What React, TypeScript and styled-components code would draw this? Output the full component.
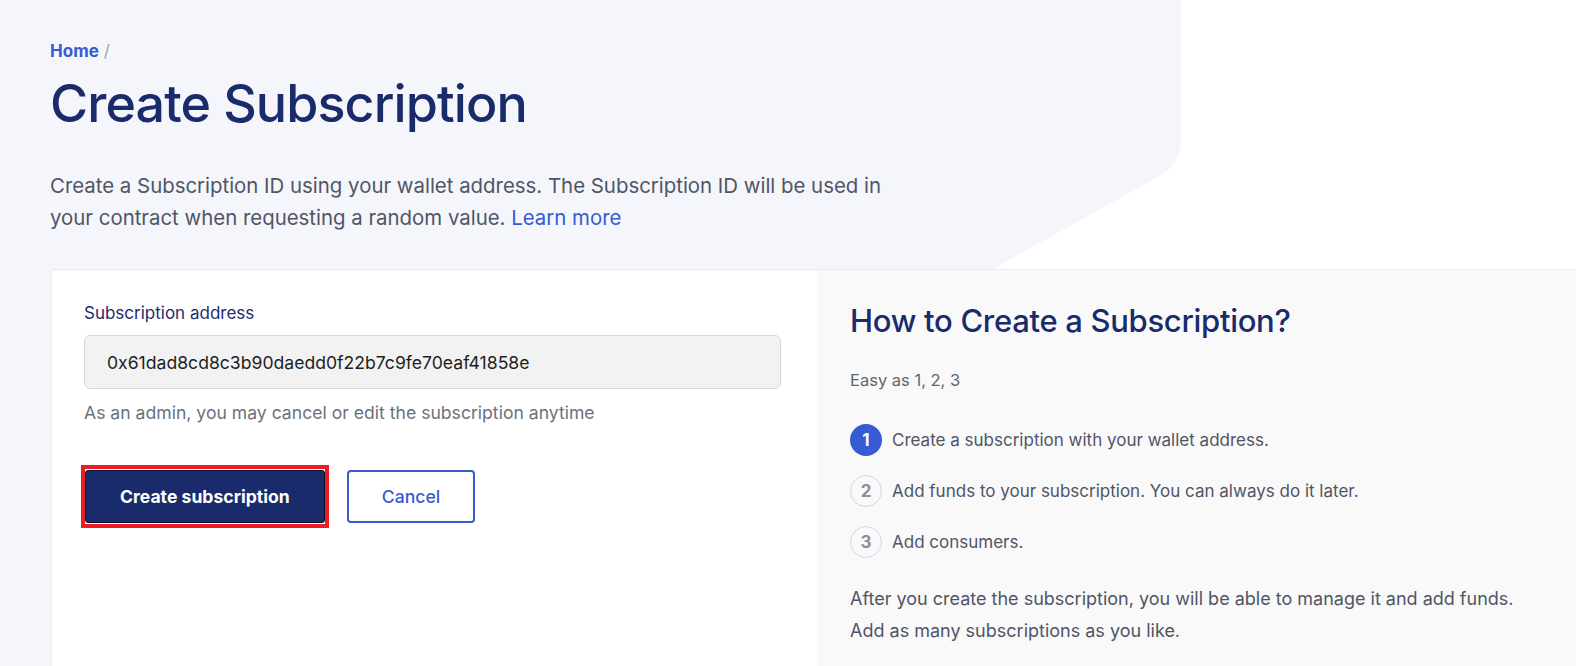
import React from 'react'
import styled, { createGlobalStyle } from 'styled-components'

const GlobalStyle = createGlobalStyle`
  body {
    margin: 0;
    background: #ffffff;
    font-family: Inter, 'Noto Sans', sans-serif;
    -webkit-font-smoothing: antialiased;
  }
`

const Page = styled.div`
  position: relative;
  min-height: 666px;
  overflow: hidden;

  /* light hero shape with the cut corner behind the header */
  &::before {
    content: '';
    position: absolute;
    left: 0;
    top: 0;
    width: 1181px;
    height: 900px;
    background: #f5f6fb;
    clip-path: path('M0 0 H1181 V140 Q1181 162 1163 174 L0 825 Z');
  }
`

const Header = styled.header`
  position: relative;
  padding: 40px 50px 0;
`

const Breadcrumb = styled.nav`
  display: flex;
  gap: 5px;
  font-size: 17px;
  line-height: 22px;
  font-weight: 700;
  color: #375bd2;

  span {
    color: #a0a4ad;
    font-weight: 400;
  }
`

const Title = styled.h1`
  margin: 10px 0 0;
  font-size: 52px;
  line-height: 64px;
  font-weight: 500;
  letter-spacing: -0.9px;
  color: #1a2b6b;
`

const Lead = styled.p`
  margin: 34px 0 0;
  max-width: 850px;
  font-size: 20.4px;
  line-height: 32px;
  color: #4f5566;
`

const Link = styled.a`
  color: #375bd2;
  text-decoration: none;
`

const Card = styled.section`
  position: relative;
  margin: 35px 0 0 51px;
  display: grid;
  grid-template-columns: 765px 1fr;
  min-height: 420px;
  border: 1px solid #e8eaef;
  border-right: none;
  border-radius: 4px 0 0 0;
  background: #ffffff;
  overflow: hidden;
`

const FormPanel = styled.div`
  padding: 32px 32px 40px;
`

const Label = styled.label`
  display: block;
  font-size: 17px;
  line-height: 22px;
  color: #1f2d6b;
`

const AddressField = styled.div`
  margin-top: 11px;
  width: 697px;
  height: 54px;
  box-sizing: border-box;
  display: flex;
  align-items: center;
  padding: 0 22px;
  background: #f2f2f2;
  border: 1px solid #d6d8dc;
  border-radius: 6px;
  font-size: 17.6px;
  color: #1e1f24;
`

const Hint = styled.p`
  margin: 13px 0 0;
  font-size: 17.6px;
  line-height: 22px;
  color: #6b717c;
`

const Actions = styled.div`
  margin-top: 41px;
  display: flex;
  align-items: center;
  gap: 18px;
`

const Highlight = styled.span`
  display: inline-flex;
  margin-left: -3px;
  padding: 1px 0;
  border: 4px solid #ec1c24;
`

const Button = styled.button<{ $primary?: boolean }>`
  height: 53px;
  box-sizing: border-box;
  padding: 0 ${(p) => (p.$primary ? '34px' : '33px')};
  border-radius: ${(p) => (p.$primary ? '3px' : '4px')};
  font-family: inherit;
  font-size: 17.6px;
  font-weight: ${(p) => (p.$primary ? 700 : 500)};
  cursor: pointer;
  background: ${(p) => (p.$primary ? '#1a2b6b' : '#ffffff')};
  color: ${(p) => (p.$primary ? '#ffffff' : '#375bd2')};
  border: ${(p) => (p.$primary ? '1px solid #0b1128' : '2px solid #375bd2')};
`

const GuidePanel = styled.aside`
  background: #f9f9fa;
  padding: 31px 33px 40px;
`

const GuideTitle = styled.h2`
  margin: 0;
  font-size: 31px;
  line-height: 40px;
  font-weight: 500;
  letter-spacing: -0.3px;
  color: #1a2b6b;
`

const Muted = styled.p`
  margin: 29px 0 0;
  font-size: 16.5px;
  line-height: 20px;
  color: #5f6572;
`

const Steps = styled.ol`
  list-style: none;
  margin: 34px 0 0;
  padding: 0;
  display: flex;
  flex-direction: column;
  gap: 19px;
`

const Step = styled.li`
  display: flex;
  align-items: center;
  gap: 10px;
  font-size: 17px;
  color: #4f5566;
`

const StepNum = styled.span<{ $active?: boolean }>`
  width: 32px;
  height: 32px;
  box-sizing: border-box;
  flex-shrink: 0;
  border-radius: 50%;
  display: flex;
  align-items: center;
  justify-content: center;
  font-size: 17px;
  font-weight: 700;
  background: ${(p) => (p.$active ? '#375bd2' : 'transparent')};
  color: ${(p) => (p.$active ? '#ffffff' : '#8a8f99')};
  border: ${(p) => (p.$active ? 'none' : '1.5px solid #d5d8de')};
`

const Note = styled.p`
  margin: 25px 0 0;
  font-size: 18px;
  line-height: 32px;
  color: #4f5566;
`

const steps = [
  'Create a subscription with your wallet address.',
  'Add funds to your subscription. You can always do it later.',
  'Add consumers.',
]

export default function App() {
  return (
    <>
      <GlobalStyle />
      <Page>
        <Header>
          <Breadcrumb>
            Home <span>/</span>
          </Breadcrumb>
          <Title>Create Subscription</Title>
          <Lead>
            Create a Subscription ID using your wallet address. The Subscription ID will be used in your contract
            when requesting a random value. <Link href="#">Learn more</Link>
          </Lead>
        </Header>
        <Card>
          <FormPanel>
            <Label>Subscription address</Label>
            <AddressField>0x61dad8cd8c3b90daedd0f22b7c9fe70eaf41858e</AddressField>
            <Hint>As an admin, you may cancel or edit the subscription anytime</Hint>
            <Actions>
              <Highlight>
                <Button $primary>Create subscription</Button>
              </Highlight>
              <Button>Cancel</Button>
            </Actions>
          </FormPanel>
          <GuidePanel>
            <GuideTitle>How to Create a Subscription?</GuideTitle>
            <Muted>Easy as 1, 2, 3</Muted>
            <Steps>
              {steps.map((text, index) => (
                <Step key={text}>
                  <StepNum $active={index === 0}>{index + 1}</StepNum>
                  {text}
                </Step>
              ))}
            </Steps>
            <Note>
              After you create the subscription, you will be able to manage it and add funds.
              <br />
              Add as many subscriptions as you like.
            </Note>
          </GuidePanel>
        </Card>
      </Page>
    </>
  )
}
